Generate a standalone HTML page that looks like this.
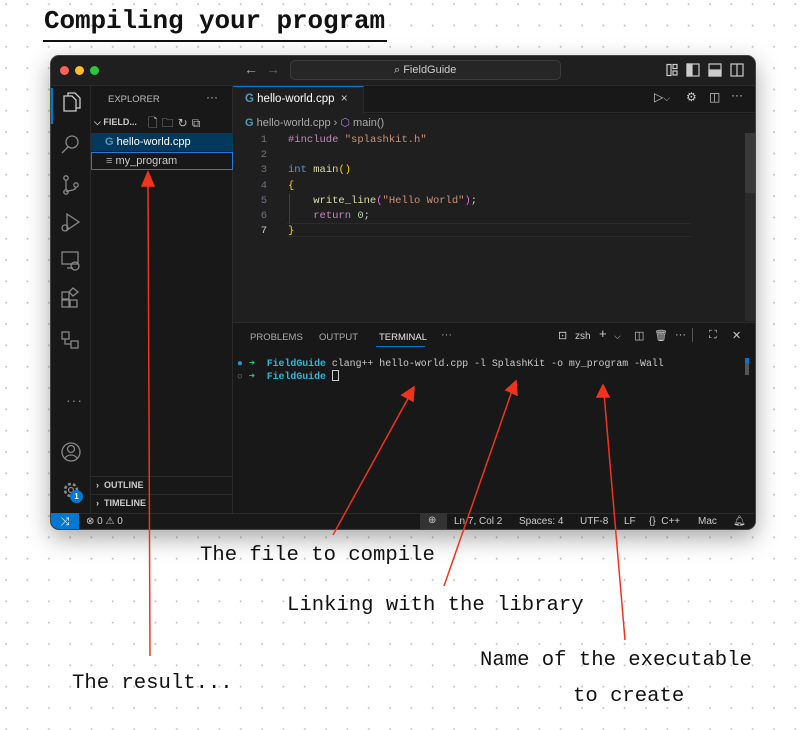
<!DOCTYPE html>
<html><head><meta charset="utf-8"><style>
*{margin:0;padding:0;box-sizing:border-box}
body{width:805px;height:730px;overflow:hidden;position:relative;background:#fff;
background-image:radial-gradient(circle,#c4c4c4 0.8px,transparent 1.2px);background-size:21.33px 21.33px;background-position:-4.5px -6.5px;font-family:"Liberation Sans",sans-serif}
.a{position:absolute}
.hand{font-family:"Liberation Mono",monospace;color:#111;white-space:nowrap}
.win{left:50px;top:55px;width:706px;height:475px;background:#181818;border-radius:9px;overflow:hidden;box-shadow:0 8px 24px rgba(0,0,0,.35);border:1px solid #444}
.mono{font-family:"Liberation Mono",monospace}
.t{color:#ccc;font-size:11px;white-space:nowrap}
.s{position:absolute;top:460px;font-size:10px;color:#ccc;white-space:nowrap}
.p{position:absolute;top:273px;font-size:11px;color:#ccc;white-space:nowrap}
</style></head><body>
<div class="a hand" style="left:44px;top:6px;font-size:26px;font-weight:bold;letter-spacing:-0.1px">Compiling your program</div>
<div class="a" style="left:43px;top:40px;width:344px;height:2px;background:#111"></div>

<div class="a win">
 <div class="a" style="left:0;top:0;width:706px;height:30px;background:#1f1f1f;border-bottom:1px solid #2b2b2b"></div>
 <div class="a" style="left:9px;top:10px;width:9px;height:9px;border-radius:50%;background:#fe5f57"></div>
 <div class="a" style="left:24px;top:10px;width:9px;height:9px;border-radius:50%;background:#febc2e"></div>
 <div class="a" style="left:39px;top:10px;width:9px;height:9px;border-radius:50%;background:#28c840"></div>
 <div class="a t" style="left:193px;top:5px;font-size:14px;color:#aaa">←</div>
 <div class="a t" style="left:215px;top:5px;font-size:14px;color:#666">→</div>
 <div class="a" style="left:239px;top:4px;width:271px;height:20px;border:1px solid #3c3c3c;border-radius:5px;background:#262626"></div>
 <div class="a t" style="left:343px;top:8px;font-size:11px">⌕ FieldGuide</div>
 <svg class="a" style="left:612px;top:6px" width="90" height="16" fill="none" stroke="#ccc" stroke-width="1.2">
  <rect x="4" y="2.5" width="4" height="11"/><rect x="10" y="2.5" width="4" height="4"/><rect x="10" y="9" width="4" height="4"/>
  <rect x="24" y="2" width="12" height="12"/><rect x="24" y="2" width="5" height="12" fill="#ccc"/>
  <rect x="46" y="2" width="12" height="12"/><rect x="46" y="8" width="12" height="6" fill="#ccc"/>
  <rect x="68" y="2" width="12" height="12"/><line x1="74" y1="2" x2="74" y2="14"/>
 </svg>
 <div class="a" style="left:0;top:30px;width:40px;height:427px;background:#181818;border-right:1px solid #2b2b2b"></div>
 <div class="a" style="left:0;top:32px;width:2px;height:36px;background:#0078d4"></div>
 <svg class="a" style="left:8px;top:36px" width="24" height="420" fill="none" stroke="#ccc" stroke-width="1.3">
  <path d="M5 4h8l4 4v11H5z M9 4V1h7l5 5v10h-4"/>
  <g stroke="#888"><circle cx="13" cy="50" r="6"/><path d="M9 55l-6 6"/>
  <circle cx="7" cy="86" r="2.2"/><circle cx="7" cy="100" r="2.2"/><circle cx="17" cy="93" r="2.2"/><path d="M7 88v10M17 95c0 4-8 3-10 5"/>
  <path d="M8 122l12 8-12 8z"/><circle cx="6" cy="136" r="3"/>
  <rect x="3" y="160" width="16" height="12"/><path d="M8 176h6"/><circle cx="16" cy="174" r="4"/>
  <rect x="3" y="200" width="7" height="7"/><rect x="3" y="208" width="7" height="7"/><rect x="11" y="208" width="7" height="7"/><path d="M14 196l5 4-5 4-4-4z"/>
  <rect x="3" y="240" width="7" height="7"/><rect x="12" y="249" width="7" height="7"/><path d="M6 247v5h6"/>
  <circle cx="12" cy="360" r="9"/><circle cx="12" cy="357" r="3.5"/><path d="M6 366c3-4 9-4 12 0"/>
  <circle cx="12" cy="398" r="6" stroke-dasharray="3 2" stroke-width="2.5"/><circle cx="12" cy="398" r="2.5"/></g>
 </svg>
 <div class="a" style="left:15px;top:336px;color:#888;font-size:14px;letter-spacing:1px">···</div>
 <div class="a" style="left:19px;top:434px;width:13px;height:13px;border-radius:50%;background:#0078d4;color:#fff;font-size:8px;font-weight:bold;text-align:center;line-height:13px">1</div>
 <div class="a" style="left:40px;top:30px;width:142px;height:427px;background:#181818;border-right:1px solid #2b2b2b"></div>
 <div class="a t" style="left:57px;top:38px;font-size:9.5px;color:#bbb">EXPLORER</div>
 <div class="a t" style="left:155px;top:34px;font-size:12px;color:#bbb">···</div>
 <div class="a t" style="left:43px;top:61px;font-size:9px;font-weight:bold;color:#ccc">⌵ FIELD...</div>
 <div class="a t" style="left:97px;top:58px;font-size:12px;color:#bbb;letter-spacing:4px">🗋🗀↻⧉</div>
 <div class="a" style="left:40px;top:77px;width:142px;height:18px;background:#04395e"></div>
 <div class="a t" style="left:54px;top:80px;font-size:11px;color:#fff"><span style="color:#519aba;font-weight:bold">G</span> hello-world.cpp</div>
 <div class="a" style="left:40px;top:96px;width:142px;height:18px;border:1px solid #2b79d0"></div>
 <div class="a t" style="left:55px;top:99px;font-size:11px;color:#ccc"><span style="color:#aaa">≡</span> my_program</div>
 <div class="a" style="left:40px;top:420px;width:142px;height:1px;background:#2b2b2b"></div>
 <div class="a" style="left:40px;top:438px;width:142px;height:1px;background:#2b2b2b"></div>
 <div class="a t" style="left:45px;top:424px;font-size:9px;font-weight:bold;color:#ccc">›&nbsp; OUTLINE</div>
 <div class="a t" style="left:45px;top:442px;font-size:9px;font-weight:bold;color:#ccc">›&nbsp; TIMELINE</div>
 <div class="a" style="left:182px;top:30px;width:524px;height:27px;background:#181818;border-bottom:1px solid #2b2b2b"></div>
 <div class="a" style="left:182px;top:30px;width:131px;height:28px;background:#1f1f1f;border-top:1px solid #0078d4;border-right:1px solid #2b2b2b"></div>
 <div class="a t" style="left:194px;top:37px;font-size:11.5px;color:#fff"><span style="color:#519aba;font-weight:bold">G</span> hello-world.cpp&nbsp;&nbsp;<span style="color:#ccc">×</span></div>
 <div class="a t" style="left:603px;top:34px;font-size:12px;color:#ccc">▷<span style="font-size:9px">⌵</span></div>
 <div class="a t" style="left:635px;top:34px;font-size:12px;color:#ccc">⚙</div>
 <div class="a t" style="left:658px;top:34px;font-size:12px;color:#ccc">◫</div>
 <div class="a t" style="left:680px;top:32px;font-size:12px;color:#ccc">···</div>
 <div class="a" style="left:182px;top:58px;width:524px;height:208px;background:#1f1f1f"></div>
 <div class="a t" style="left:194px;top:60px;font-size:11px;color:#aaa"><span style="color:#519aba;font-weight:bold">G</span> hello-world.cpp › <span style="color:#b180d7">⬡</span> main()</div>
 <div class="a mono" style="left:190px;top:77px;font-size:10.5px;line-height:15.2px;color:#6e7681;text-align:right;width:26px">1<br>2<br>3<br>4<br>5<br>6<br><span style="color:#ccc">7</span></div>
 <div class="a mono" style="left:237px;top:77px;font-size:10.5px;line-height:15.2px;color:#ccc;white-space:pre"><span style="color:#c586c0">#include</span> <span style="color:#ce9178">"splashkit.h"</span>

<span style="color:#569cd6">int</span> <span style="color:#dcdcaa">main</span><span style="color:#ffd700">()</span>
<span style="color:#ffd700">{</span>
    <span style="color:#dcdcaa">write_line</span><span style="color:#da70d6">(</span><span style="color:#ce9178">"Hello World"</span><span style="color:#da70d6">)</span>;
    <span style="color:#c586c0">return</span> <span style="color:#b5cea8">0</span>;
<span style="color:#ffd700">}</span></div>
 <div class="a" style="left:238px;top:138px;width:1px;height:30px;background:#404040"></div>
 <div class="a" style="left:236px;top:167px;width:404px;height:14px;border-top:1px solid #2a2a2a;border-bottom:1px solid #2a2a2a"></div>
 <div class="a" style="left:694px;top:77px;width:12px;height:188px;background:#2a2a2a"></div>
 <div class="a" style="left:694px;top:77px;width:12px;height:60px;background:#3a3a3a"></div>
 <div class="a" style="left:182px;top:266px;width:524px;height:191px;background:#181818;border-top:1px solid #2b2b2b"></div>
 <div class="a t" style="left:199px;top:276px;font-size:9.5px;color:#aaa">PROBLEMS</div>
 <div class="a t" style="left:268px;top:276px;font-size:9.5px;color:#aaa">OUTPUT</div>
 <div class="a t" style="left:328px;top:276px;font-size:9.5px;color:#e7e7e7">TERMINAL</div>
 <div class="a" style="left:325px;top:290px;width:49px;height:1px;background:#0078d4"></div>
 <div class="a t" style="left:390px;top:273px;font-size:11px;color:#aaa">···</div>
 <div class="p" style="left:507px">⊡</div>
 <div class="p" style="left:524px;top:275px;font-size:10px">zsh</div>
 <div class="p" style="left:548px;font-size:13px;top:270px">+</div>
 <div class="p" style="left:563px;font-size:9px;top:275px">⌵</div>
 <div class="p" style="left:583px">◫</div>
 <div class="p" style="left:603px">🗑</div>
 <div class="p" style="left:624px">···</div>
 <div class="a" style="left:641px;top:272px;width:1px;height:14px;background:#555"></div>
 <div class="p" style="left:658px">⛶</div>
 <div class="p" style="left:681px">✕</div>
 <div class="a mono" style="left:186px;top:302px;font-size:9.9px;line-height:12px;color:#ccc;white-space:pre"><span style="color:#2b8fd6">●</span> <span style="color:#23d18b">➜</span>  <b style="color:#29b8db">FieldGuide</b> clang++ hello-world.cpp -l SplashKit -o my_program -Wall
<span style="color:#888">○</span> <span style="color:#23d18b">➜</span>  <b style="color:#29b8db">FieldGuide</b> <span style="display:inline-block;width:7px;height:11px;border:1px solid #ccc;vertical-align:-2px"></span></div>
 <div class="a" style="left:694px;top:302px;width:4px;height:5px;background:#0078d4"></div>
 <div class="a" style="left:694px;top:307px;width:4px;height:12px;background:#555"></div>
 <div class="a" style="left:0;top:457px;width:706px;height:18px;background:#181818;border-top:1px solid #2b2b2b"></div>
 <div class="a" style="left:0;top:457px;width:28px;height:18px;background:#0078d4;color:#fff;font-size:11px;text-align:center;line-height:18px">⤨</div>
 <div class="s" style="left:35px">⊗ 0 ⚠ 0</div>
 <div class="a" style="left:369px;top:457px;width:27px;height:18px;background:#333"></div>
 <div class="s" style="left:377px;top:459px">⊕</div>
 <div class="s" style="left:403px">Ln 7, Col 2</div>
 <div class="s" style="left:468px">Spaces: 4</div>
 <div class="s" style="left:529px">UTF-8</div>
 <div class="s" style="left:573px">LF</div>
 <div class="s" style="left:598px">{}&nbsp; C++</div>
 <div class="s" style="left:647px">Mac</div>
 <div class="s" style="left:682px">🔔︎</div>
</div>

<svg class="a" style="left:0;top:0" width="805" height="730" fill="none" stroke="#f0341c" stroke-width="1.5">
 <path d="M150 656L148 178"/><path d="M142 186l6-14 6 14z" fill="#f0341c"/>
 <path d="M333 535L411 393"/><path d="M402 395l12-8-1 14z" fill="#f0341c"/>
 <path d="M444 586L513 388"/><path d="M506 390l10-9 1 14z" fill="#f0341c"/>
 <path d="M625 640L604 393"/><path d="M597 397l6-12 6 12z" fill="#f0341c"/>
</svg>
<div class="a hand" style="left:200px;top:544px;font-size:20.6px">The file to compile</div>
<div class="a hand" style="left:287px;top:594px;font-size:20.6px">Linking with the library</div>
<div class="a hand" style="left:480px;top:649px;font-size:20.6px">Name of the executable</div>
<div class="a hand" style="left:573px;top:685px;font-size:20.6px">to create</div>
<div class="a hand" style="left:72px;top:672px;font-size:20.6px">The result...</div>
</body></html>
